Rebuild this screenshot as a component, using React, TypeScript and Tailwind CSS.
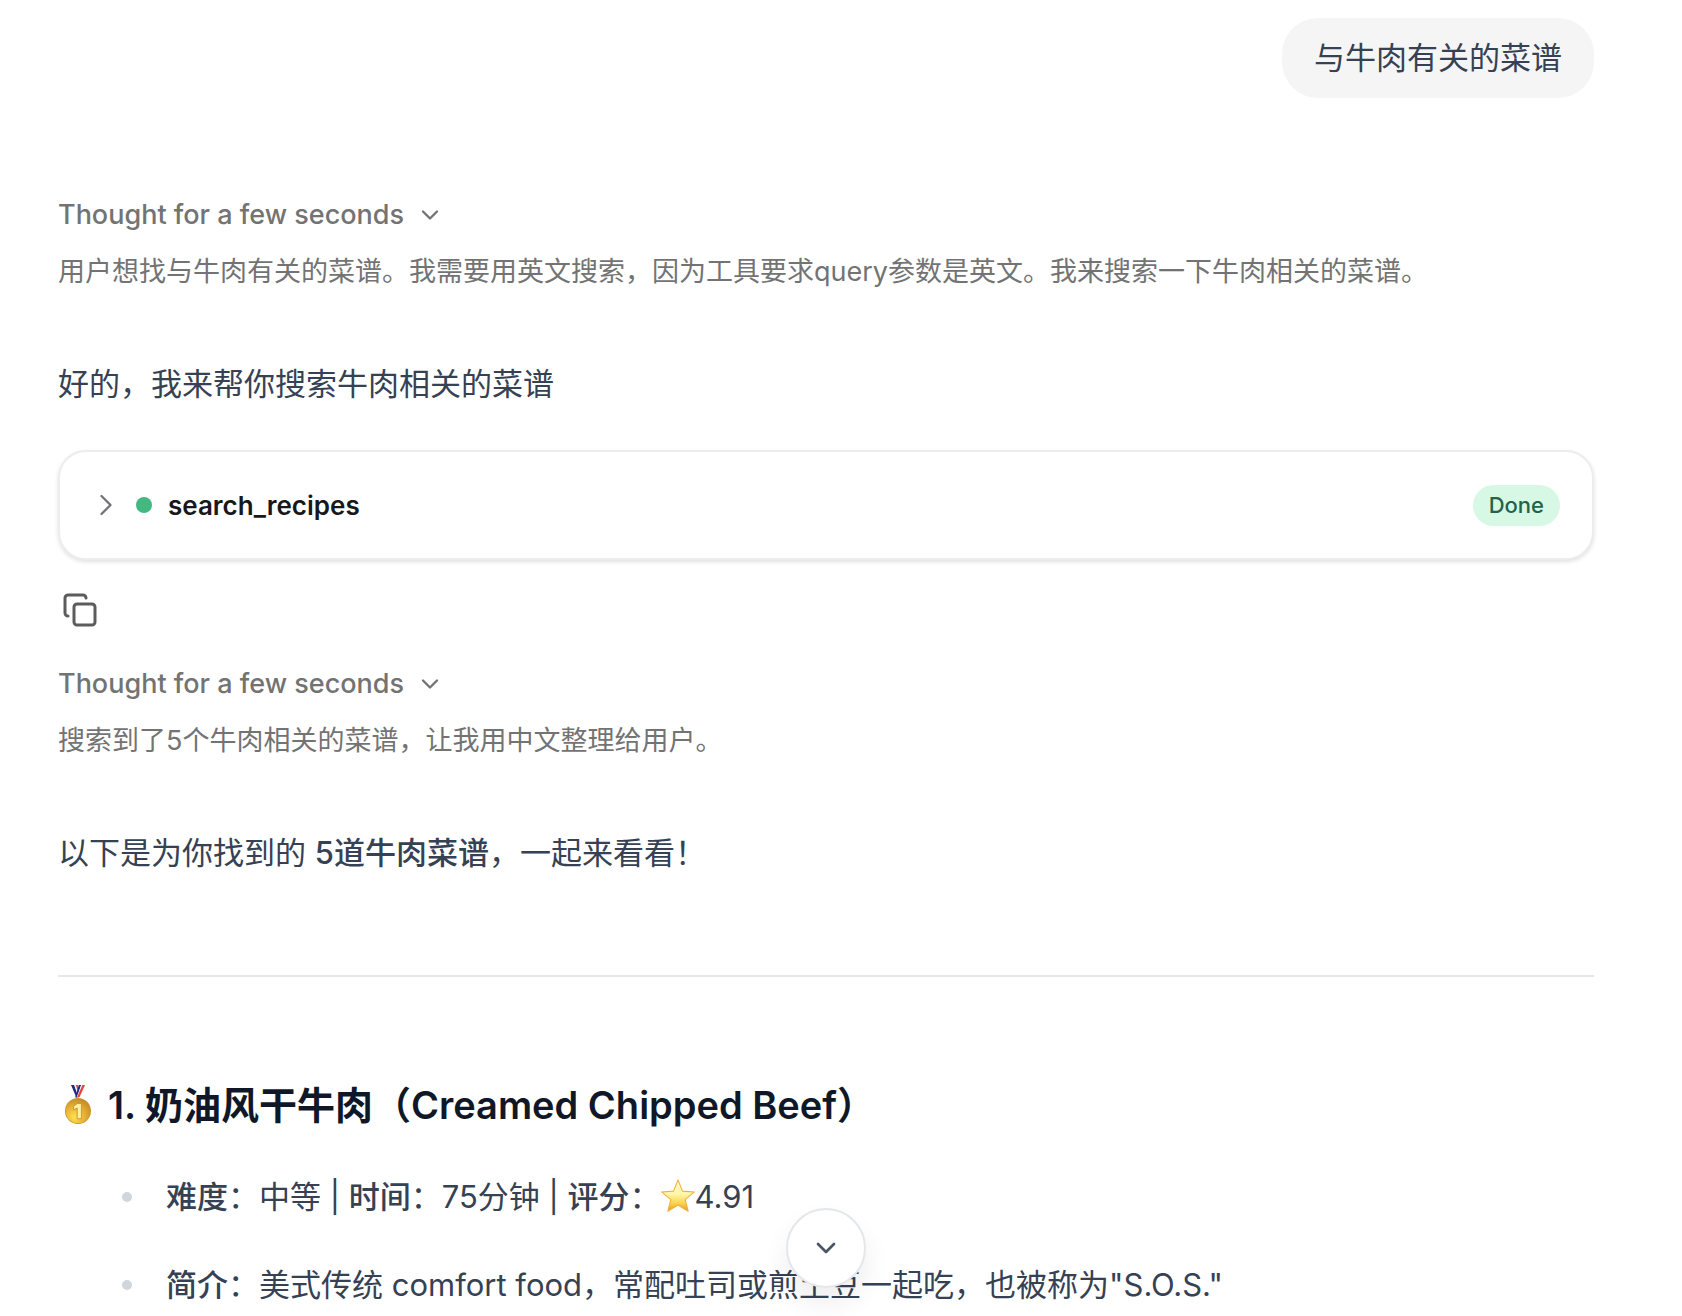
import React, { useState } from 'react';
import { ChevronDown, ChevronRight, Copy } from 'lucide-react';

// Gold medal used in front of the first recipe
function MedalIcon() {
  return (
    <svg viewBox="0 0 40 44" className="w-10 h-11 shrink-0" aria-hidden="true">
      <defs>
        <radialGradient id="medal-gold" cx="0.35" cy="0.75" r="0.8">
          <stop offset="0" stopColor="#ffe04f" />
          <stop offset="0.5" stopColor="#e8b436" />
          <stop offset="1" stopColor="#c48a22" />
        </radialGradient>
      </defs>
      <path d="M13 2h3.2l4.6 12.5h-2.4z" fill="#1c2a86" />
      <path d="M16.2 2h1.6l3.6 9-1 3z" fill="#f3f3f6" />
      <path d="M17.8 2h2l2.2 6.5-1.2 3z" fill="#e2443a" />
      <path d="M20.8 2h2.4l-4.4 12.5h-1.6z" fill="#1c2a86" />
      <path d="M23.2 2h1.2l-4.8 12.5h-1z" fill="#f3f3f6" />
      <path d="M24.4 2H27l-5.4 12h-2.4z" fill="#e2443a" />
      <circle cx="20" cy="28" r="13" fill="#c9962f" />
      <circle cx="20" cy="28" r="12.2" fill="url(#medal-gold)" />
      <path
        d="M19.4 20.5h4v15.2h-4.2V25l-3.6 1.8v-3.6z"
        fill="#fff0a0"
        stroke="#c08c28"
        strokeWidth="0.8"
      />
    </svg>
  );
}

function StarIcon() {
  return (
    <svg viewBox="1 1 32 32" className="inline-block w-[34px] h-[34px] -mt-2" aria-hidden="true">
      <defs>
        <linearGradient id="star-gold" x1="0" y1="0" x2="0" y2="1">
          <stop offset="0" stopColor="#fffbd0" />
          <stop offset="0.45" stopColor="#fff6a8" />
          <stop offset="0.75" stopColor="#fbd24c" />
          <stop offset="1" stopColor="#e29a22" />
        </linearGradient>
      </defs>
      <path
        d="M17 2l4.2 10.4 11.2.8-8.6 7.2 2.8 11L17 25.6l-9.6 5.8 2.8-11-8.6-7.2 11.2-.8z"
        fill="url(#star-gold)"
        stroke="#eeb13d"
        strokeWidth="1"
        strokeLinejoin="round"
      />
    </svg>
  );
}

function Thought({ children }: { children: string }) {
  const [open, setOpen] = useState(true);

  return (
    <div className="text-[#737373]">
      <button
        type="button"
        onClick={() => setOpen(!open)}
        aria-expanded={open}
        className="flex items-center gap-3 h-[42px] text-[27px] font-medium"
      >
        Thought for a few seconds
        <ChevronDown size={28} strokeWidth={2} />
      </button>
      {open && <p className="mt-3 text-[27px] leading-[48px]">{children}</p>}
    </div>
  );
}

function ToolCall({ name, status }: { name: string; status: string }) {
  return (
    <div className="flex items-center h-[110px] px-8 rounded-[28px] border-2 border-[#ededed] bg-white shadow-[0_2px_4px_rgba(0,0,0,0.12)]">
      <button type="button" className="flex items-center text-[26px] font-semibold text-[#18181b]">
        <ChevronRight size={36} strokeWidth={1.5} className="-ml-1 text-[#71717a]" />
        <span className="mx-3 mr-4 size-4 rounded-full bg-[#45b881]" />
        {name}
      </button>
      <span className="ml-auto px-4 rounded-full bg-[#d8f8e6] text-[22px] leading-[41px] font-medium text-[#22634a]">
        {status}
      </span>
    </div>
  );
}

export default function App() {
  return (
    <div className="relative h-screen overflow-hidden bg-white font-['Inter','Noto_Sans_CJK_SC',sans-serif] text-[#364153]">
      <main className="flex flex-col pl-[58px] pr-[88px] pt-[18px]">
        {/* User message */}
        <div className="self-end px-8 py-4 rounded-[36px] bg-[#f5f5f5] text-[31px] leading-[48px]">
          与牛肉有关的菜谱
        </div>

        {/* First step: tool call */}
        <section className="mt-24">
          <Thought>
            用户想找与牛肉有关的菜谱。我需要用英文搜索，因为工具要求query参数是英文。我来搜索一下牛肉相关的菜谱。
          </Thought>
          <p className="mt-16 mb-[42px] text-[31px] leading-[48px]">好的，我来帮你搜索牛肉相关的菜谱</p>
          <ToolCall name="search_recipes" status="Done" />
          <button type="button" aria-label="Copy" className="block mt-8 ml-1 text-[#5c5c5c]">
            <Copy size={36} strokeWidth={2} />
          </button>
        </section>

        {/* Second step: answer */}
        <section className="mt-[35px]">
          <Thought>搜索到了5个牛肉相关的菜谱，让我用中文整理给用户。</Thought>
          <p className="mt-16 text-[31px] leading-[48px]">
            以下是为你找到的 <strong className="font-medium">5道牛肉菜谱</strong>，一起来看看！
          </p>
          <hr className="mt-[98px] mb-[100px] border-t-2 border-[#e5e7eb]" />
          <h3 className="flex items-center gap-[10px] text-[38px] leading-[56px] font-semibold text-[#101828]">
            <MedalIcon />
            1. 奶油风干牛肉（Creamed Chipped Beef）
          </h3>
          <ul className="mt-9 flex flex-col gap-8 pl-[64px] text-[31px] leading-[56px]">
            <li className="flex items-center gap-[34px]">
              <span className="size-[10px] shrink-0 rounded-full bg-[#d1d5dc]" />
              <p>
                <strong className="font-medium">难度</strong>：中等 | <strong className="font-medium">时间</strong>
                ：75分钟 | <strong className="font-medium">评分</strong>：<StarIcon />
                4.91
              </p>
            </li>
            <li className="flex items-center gap-[34px]">
              <span className="size-[10px] shrink-0 rounded-full bg-[#d1d5dc]" />
              <p>
                <strong className="font-medium">简介</strong>
                ：美式传统 comfort food，常配吐司或煎土豆一起吃，也被称为"S.O.S."
              </p>
            </li>
          </ul>
        </section>
      </main>

      {/* Scroll to bottom */}
      <div className="absolute inset-x-0 bottom-7 flex justify-center pl-[58px] pr-[88px]">
        <button
          type="button"
          aria-label="Scroll to bottom"
          className="flex items-center justify-center size-20 rounded-full border-2 border-[#e5e7eb] bg-white text-[#4a5565] shadow-[0_16px_28px_rgba(0,0,0,0.07)]"
        >
          <ChevronDown size={32} strokeWidth={2} />
        </button>
      </div>
    </div>
  );
}
